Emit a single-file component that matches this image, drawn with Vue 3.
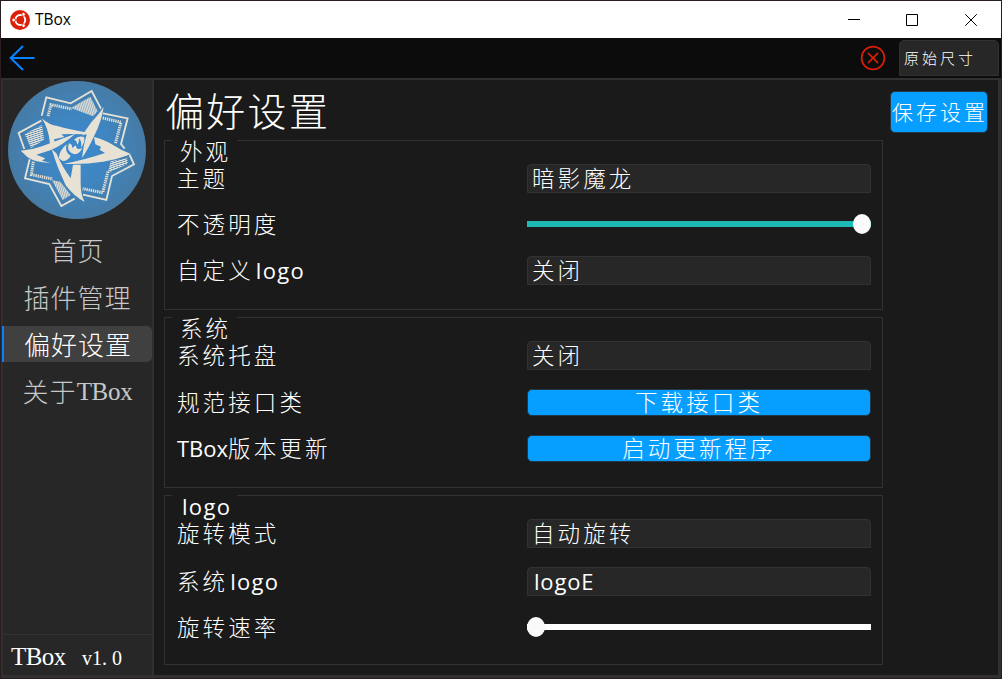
<script setup>
const navItems = [
  { cjk: '首页', latin: '' },
  { cjk: '插件管理', latin: '' },
  { cjk: '偏好设置', latin: '', active: true },
  { cjk: '关于', latin: 'TBox' },
]

const groups = [
  {
    key: 'appearance',
    title: '外观',
    rows: [
      { label: '主题', type: 'select', value: '暗影魔龙' },
      { label: '不透明度', type: 'slider', percent: 100 },
      { label: '自定义', post: 'logo', type: 'select', value: '关闭' },
    ],
  },
  {
    key: 'system',
    title: '系统',
    rows: [
      { label: '系统托盘', type: 'select', value: '关闭' },
      { label: '规范接口类', type: 'button', value: '下载接口类' },
      { pre: 'TBox', label: '版本更新', type: 'button', value: '启动更新程序' },
    ],
  },
  {
    key: 'rotation',
    latinTitle: 'logo',
    rows: [
      { label: '旋转模式', type: 'select', value: '自动旋转' },
      { label: '系统', post: 'logo', type: 'select', latinValue: 'logoE' },
      { label: '旋转速率', type: 'slider', percent: 0 },
    ],
  },
]
</script>

<template>
  <div class="window">
    <header class="titlebar">
      <svg class="app-icon" width="20" height="20" viewBox="0 0 20 20">
        <circle cx="10" cy="10" r="10" fill="#dd1f0a" />
        <circle cx="10.3" cy="10" r="4.9" fill="none" stroke="#fff" stroke-width="2" />
        <path d="M10.3 10L13.4 4.4M10.3 10L13.4 15.6M10.3 10H4" stroke="#dd1f0a" stroke-width="1.2" />
        <circle cx="10.3" cy="10" r="3.4" fill="#dd1f0a" />
        <g fill="#fff" stroke="#dd1f0a" stroke-width=".7">
          <circle cx="3.7" cy="10" r="1.8" />
          <circle cx="13.5" cy="4.4" r="1.8" />
          <circle cx="13.5" cy="15.6" r="1.8" />
        </g>
      </svg>
      <span class="app-name">TBox</span>
      <svg class="win-controls" width="140" height="20" viewBox="0 0 140 20" fill="none" stroke="#000" stroke-width="1">
        <path d="M8 9.5H20M66.500 4.500H77.500V15.500H66.500Z" />
        <path d="M125.200 4.200L136.800 15.800M136.800 4.200L125.200 15.800" />
      </svg>
    </header>

    <div class="toolbar">
      <svg width="26" height="26" viewBox="0 0 26 26" fill="none" stroke="#0782ff" stroke-width="2.100">
        <path d="M25.500 13H1.500M14 .900L1.700 13L14 25.100" />
      </svg>
      <div class="toolbar-right">
        <svg width="26" height="26" viewBox="0 0 26 26" fill="none" stroke="#d81e06" stroke-width="1.700" stroke-linecap="round">
          <circle cx="13" cy="13" r="11.400" />
          <path d="M8.400 8.400L17.600 17.600M17.600 8.400L8.400 17.600" />
        </svg>
        <div class="size-select">原始尺寸</div>
      </div>
    </div>

    <div class="body">
      <aside class="sidebar">
        <svg class="emblem" width="138" height="138" viewBox="24 18 414 414">
          <defs>
            <radialGradient id="disc">
              <stop offset="0" stop-color="#3b8ad0" />
              <stop offset=".5" stop-color="#3f85c0" />
              <stop offset="1" stop-color="#467ba5" />
            </radialGradient>
            <pattern id="hatch" width="5" height="5" patternUnits="userSpaceOnUse" patternTransform="rotate(-14)">
              <rect width="3.700" height="5" fill="#e8e2d5" />
            </pattern>
            <pattern id="hatch-flat" width="6" height="6" patternUnits="userSpaceOnUse" patternTransform="rotate(-18)">
              <rect width="6" height="4" fill="#e8e2d5" />
            </pattern>
          </defs>
          <circle cx="231" cy="225" r="207" fill="url(#disc)" />
          <g fill="none" stroke="#e8e2d5" stroke-width="5.500">
            <path d="M125 122L139 67L212 85L275 48L303 101" />
            <path d="M309 115L383 130L363 207L374 221" />
            <path d="M389 240L402 268L336 303L319 375L249 359" />
            <path d="M224 371L184 393L148 327L75 310L89 253" />
            <path d="M73 222L56 174L124 137" />
          </g>
          <g fill="none" stroke="#e8e2d5" stroke-width="9" stroke-dasharray="4 2.500">
            <path d="M144 123L153 89L215 102" />
            <path d="M308 129L363 142L346 206" />
            <path d="M324 290L308 353L248 341" />
            <path d="M100 260L94 299L158 312" />
          </g>
          <path d="M213 99L271 65L293 109L279 124Z" fill="url(#hatch)" />
          <path d="M156 316L181 320L212 360L188 375Z" fill="url(#hatch)" />
          <path d="M74 177L126 150L132 194L93 219Z" fill="url(#hatch-flat)" />
          <path d="M332 259L382 250L383 266L323 295Z" fill="url(#hatch-flat)" />
          <g fill="#e8e2d5">
            <path d="M125 130Q149 151 172 153Q208 163 256 172L252 178Q211 176 184 178L193 186L162 193L164 202L150 206Q145 157 125 130Z" />
            <path d="M311 96Q305 139 282 184Q265 222 246 249Q249 215 260 178L246 181Q266 153 275 140Q291 125 311 96Z" />
            <path d="M282 186Q309 192 338 209Q365 227 393 237Q354 253 309 260Q250 269 192 266Q250 256 315 234L299 224L303 215L286 208Z" />
            <path d="M62 227Q94 226 126 214L226 176Q188 210 151 226L109 239L136 250L126 257L151 263Q108 264 83 247Z" />
            <path d="M155 223L169 235Q186 275 212 310L219 269H242V325Q242 360 254 381Q221 363 197 331Q171 277 155 223Z" />
            <path d="M200 208Q178 226 176 250L188 258Q205 257 212 242Q193 232 200 208Z" />
            <path d="M207 205Q198 225 215 235Q235 244 247 219Q228 228 228 211L216 219Q219 209 207 205Z" />
            <path d="M222 194Q236 180 252 186Q257 202 242 218Q248 200 236 190Q239 203 231 209Q232 197 222 194Z" />
          </g>
        </svg>
        <nav class="nav">
          <div v-for="item in navItems" :key="item.cjk" class="nav-item" :class="{ active: item.active }">
            <span>{{ item.cjk }}</span><span v-if="item.latin" class="nav-latin">{{ item.latin }}</span>
          </div>
        </nav>
        <footer class="version">
          <span class="product">TBox</span><span class="number">v1.<i>0</i></span>
        </footer>
      </aside>

      <main class="content">
        <div class="settings">
          <h1>偏好设置</h1>
          <section v-for="g in groups" :key="g.key" class="group" :class="g.key">
            <div class="legend"><span v-if="g.latinTitle" class="latin">{{ g.latinTitle }}</span>{{ g.title }}</div>
            <div v-for="(row, i) in g.rows" :key="i" class="row">
              <div class="label"><span v-if="row.pre" class="latin caps">{{ row.pre }}</span>{{ row.label }}<span v-if="row.post" class="latin">{{ row.post }}</span></div>
              <div v-if="row.type === 'select'" class="select"><span v-if="row.latinValue" class="latin">{{ row.latinValue }}</span>{{ row.value }}</div>
              <div v-else-if="row.type === 'button'" class="btn">{{ row.value }}</div>
              <div v-else class="slider" :class="{ full: row.percent === 100 }">
                <div class="thumb"></div>
              </div>
            </div>
          </section>
        </div>
        <div class="btn save">保存设置</div>
      </main>
    </div>
  </div>
</template>

<style>
body {
  margin: 0;
  background: #1a1a1a;
}
</style>

<style scoped>
* {
  box-sizing: border-box;
}
svg {
  display: block;
  flex: none;
}
.window {
  width: 1002px;
  height: 679px;
  border: 1px solid #281e21;
  display: flex;
  flex-direction: column;
  overflow: hidden;
  color: #fff;
  background: #1a1a1a;
  font: 300 22.500px "Noto Sans CJK SC", sans-serif;
  white-space: nowrap;
}
.titlebar {
  height: 37px;
  flex: none;
  display: flex;
  align-items: center;
  background: #fff;
  color: #000;
  padding-left: 9px;
}
.app-name {
  margin: -1px 0 0 5px;
  font: 15.500px "Open Sans", "Noto Sans", sans-serif;
}
.win-controls {
  margin-left: auto;
  margin-right: 21px;
}
.toolbar {
  height: 40px;
  flex: none;
  display: flex;
  align-items: center;
  justify-content: space-between;
  background: #0c0c0c;
  padding: 0 2px 0 8px;
}
.toolbar-right {
  display: flex;
  align-items: center;
  gap: 13px;
}
.size-select {
  width: 100px;
  height: 36px;
  border: 1px solid #323232;
  border-radius: 5px 5px 0 0;
  background: #272727;
  padding-left: 4px;
  font-size: 15px;
  line-height: 33px;
  letter-spacing: 3px;
}
.body {
  flex: 1;
  display: flex;
  border-top: 2px solid #303030;
}
.sidebar {
  width: 153px;
  height: 598px;
  flex: none;
  display: flex;
  flex-direction: column;
  background: #272727;
  border: solid #303030;
  border-width: 0 2px 3px;
}
.emblem {
  margin: 1px 0 0 5px;
}
.nav {
  display: flex;
  flex-direction: column;
  gap: 11px;
  margin: 13px 0 0 -1px;
}
.nav-item {
  height: 36px;
  display: flex;
  align-items: center;
  justify-content: center;
  font-size: 26px;
  line-height: 36px;
  letter-spacing: 1px;
  color: #c8c8c8;
  border-left: 2px solid transparent;
  border-radius: 0 5px 5px 0;
  padding: 0 1px 1px 0;
}
.nav-item.active {
  background: #404040;
  border-left-color: #0782ff;
  color: #fff;
  padding-right: 0;
}
.nav-latin {
  font-family: "Liberation Serif", serif;
  font-size: 25px;
  letter-spacing: -0.300px;
  padding-top: 2px;
}
.version {
  margin-top: auto;
  height: 41px;
  flex: none;
  border-top: 1px solid #323232;
  display: flex;
  align-items: baseline;
  padding: 8px 0 0 8px;
  font: 25px/28px "Liberation Serif", serif;
}
.product {
  width: 71px;
  letter-spacing: -0.600px;
}
.number {
  font-size: 20px;
}
.number i {
  font-style: normal;
  margin-left: 5px;
}
.content {
  flex: 1;
  height: 598px;
  display: flex;
  justify-content: space-between;
  align-items: flex-start;
  border: solid #303030;
  border-width: 0 3px 3px 0;
  padding: 0 10px 0 10px;
}
.settings {
  width: 719px;
  display: flex;
  flex-direction: column;
  gap: 7px;
}
h1 {
  margin: 0 0 -7px;
  height: 60px;
  padding-left: 1px;
  font-size: 39px;
  font-weight: 300;
  line-height: 59px;
  letter-spacing: 2.300px;
}
.group {
  position: relative;
  height: 170px;
  border: 1px solid #323232;
  padding: 14px 11px 0 12px;
  display: grid;
  grid-template-rows: 47px 44px 49px;
}
.group.system {
  height: 171px;
  grid-template-rows: 47px 47px 45px;
}
.group.rotation {
  grid-template-rows: 47px 49px 42px;
}
.legend {
  position: absolute;
  left: 7px;
  top: -1px;
  width: 65px;
  height: 24px;
  padding-left: 8px;
  background: #1a1a1a;
  line-height: 21px;
  letter-spacing: 3.100px;
}
.row {
  display: grid;
  grid-template-columns: 350px 344px;
  align-items: center;
}
.label {
  line-height: 26px;
  padding-bottom: 3px;
  letter-spacing: 3.100px;
}
.latin {
  font: 400 22px/21px "Open Sans", "Noto Sans", sans-serif;
  letter-spacing: 1.300px;
  margin-left: 2px;
}
.caps {
  margin: 0;
  letter-spacing: 0;
}
.select {
  height: 29px;
  background: #272727;
  border: 1px solid #323232;
  border-radius: 4px 4px 0 0;
  padding-left: 4px;
  line-height: 24px;
  letter-spacing: 3.100px;
}
.select .latin {
  line-height: 24px;
  letter-spacing: 0.800px;
}
.btn {
  height: 27px;
  background: #069eff;
  border: 1px solid #253747;
  border-radius: 5px;
  text-align: center;
  line-height: 22px;
  letter-spacing: 3.100px;
}
.save {
  width: 98px;
  height: 42px;
  margin-top: 11px;
  font-size: 21px;
  line-height: 38px;
  letter-spacing: 3px;
  text-indent: 1px;
}
.slider {
  height: 20px;
  display: flex;
  align-items: center;
  background: linear-gradient(#fff, #fff) center / 100% 6px no-repeat;
}
.slider.full {
  justify-content: flex-end;
  background-image: linear-gradient(#1dbbb4, #1dbbb4);
}
.thumb {
  width: 18px;
  height: 20px;
  border-radius: 50%;
  background: #fafafa;
}
</style>
